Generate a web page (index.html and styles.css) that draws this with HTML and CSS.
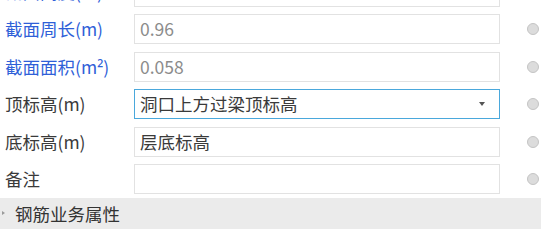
FILE: index.html
```html
<!DOCTYPE html>
<html>
<head>
<meta charset="utf-8">
<link rel="stylesheet" href="styles.css">
</head>
<body>
<div class="panel">
  <div class="rows">
    <div class="row">
      <div class="label blue">截面高度(m)</div>
      <div class="field"><span class="val gray"></span></div>
      <div class="radio-cell"></div>
    </div>
    <div class="row">
      <div class="label blue">截面周长(m)</div>
      <div class="field"><span class="val gray">0.96</span></div>
      <div class="radio-cell"><span class="radio"></span></div>
    </div>
    <div class="row">
      <div class="label blue">截面面积(m<span class="sup">²</span>)</div>
      <div class="field"><span class="val gray">0.058</span></div>
      <div class="radio-cell"><span class="radio"></span></div>
    </div>
    <div class="row">
      <div class="label">顶标高(m)</div>
      <div class="field select"><span class="val">洞口上方过梁顶标高</span><span class="caret"></span></div>
      <div class="radio-cell"><span class="radio"></span></div>
    </div>
    <div class="row">
      <div class="label">底标高(m)</div>
      <div class="field"><span class="val">层底标高</span></div>
      <div class="radio-cell"><span class="radio"></span></div>
    </div>
    <div class="row">
      <div class="label">备注</div>
      <div class="field"><span class="val"></span></div>
      <div class="radio-cell"><span class="radio"></span></div>
    </div>
  </div>
  <div class="section">
    <span class="tri"></span>
    <span class="section-title">钢筋业务属性</span>
  </div>
</div>
</body>
</html>
```
FILE: styles.css
```css
html, body {
  margin: 0;
  padding: 0;
  background: #ffffff;
  overflow: hidden;
}
body {
  font-family: "Noto Sans CJK SC", "Noto Sans", sans-serif;
  font-size: 17.5px;
  color: #333333;
}
.panel {
  width: 541px;
  height: 229px;
  overflow: hidden;
}
.rows {
  margin-top: -27.5px;
}
.row {
  height: 37.5px;
  box-sizing: border-box;
  padding-top: 4px;
  display: flex;
  align-items: flex-start;
}
.label {
  width: 134px;
  box-sizing: border-box;
  padding-left: 5px;
  height: 30px;
  line-height: 30px;
  white-space: nowrap;
  color: #3a3a3a;
}
.label.blue {
  color: #2f5fd8;
}
.sup {
  font-family: "Noto Sans", sans-serif;
}
.field {
  width: 366px;
  height: 30px;
  box-sizing: border-box;
  border: 1px solid #e2e2e2;
  background: #fff;
  display: flex;
  align-items: center;
  padding-left: 5px;
  padding-right: 12px;
}
.field.select {
  border-color: #4aa8dc;
  justify-content: space-between;
}
.val {
  line-height: 28px;
  color: #3a3a3a;
}
.val.gray {
  color: #8c8c8c;
}
.caret {
  width: 0;
  height: 0;
  border-left: 3.5px solid transparent;
  border-right: 3.5px solid transparent;
  border-top: 4px solid #555;
  margin-right: 2px;
}
.radio-cell {
  flex: 1;
  height: 30px;
  display: flex;
  align-items: center;
  justify-content: center;
  padding-left: 24px;
}
.radio {
  width: 10px;
  height: 10px;
  border-radius: 50%;
  border: 1px solid #c4c4c4;
  background: #dcdcdc;
}
.section {
  height: 31px;
  background: #ebebeb;
  display: flex;
  align-items: center;
  padding-left: 2px;
}
.tri {
  width: 0;
  height: 0;
  border-top: 2.5px solid transparent;
  border-bottom: 2.5px solid transparent;
  border-left: 3px solid #9a9a9a;
  margin-right: 10px;
}
.section-title {
  color: #333;
}
```
